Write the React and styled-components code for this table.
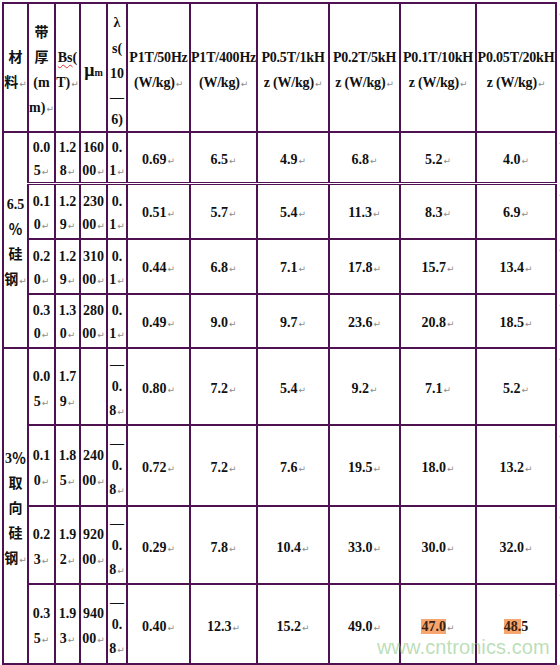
import React from "react";
import styled, { createGlobalStyle } from "styled-components";

const GlobalStyle = createGlobalStyle`
  html, body {
    margin: 0;
    padding: 0;
    background: #ffffff;
  }
  body {
    width: 560px;
    height: 665px;
    overflow: hidden;
  }
`;

const LINE = "#4e1152";

const widths = [25, 27, 25, 27, 20, 63, 67, 72, 71, 76, 80, 10];
const total = widths.reduce((a, b) => a + b, 0);

const Page = styled.div`
  position: relative;
  width: 560px;
  height: 665px;
  padding: 2px 0 0 2px;
  box-sizing: border-box;
  overflow: hidden;
`;

const Table = styled.table`
  width: ${total}px;
  border-collapse: collapse;
  table-layout: fixed;
  font-family: "Liberation Serif", "Noto Sans CJK SC", serif;
  font-weight: 700;
  font-size: 14px;
  color: #111111;
`;

const Col = styled.col`
  width: ${(p) => p.$w}px;
`;

const Row = styled.tr`
  height: ${(p) => p.$h}px;
`;

const Cell = styled.td`
  border: 2px solid ${LINE};
  border-top-style: ${(p) => (p.$double ? "double" : "solid")};
  border-top-width: ${(p) => (p.$double ? "3px" : "2px")};
  padding: ${(p) => (p.$compact ? "3px 0 0" : "5px 0 0")};
  text-align: center;
  vertical-align: middle;
  line-height: 25px;
  white-space: nowrap;
  overflow: hidden;
  letter-spacing: ${(p) => (p.$tight ? "-0.2px" : "0")};
`;

const EndCell = styled.td`
  border: none;
  padding: 4px 0 0 1px;
  vertical-align: top;
  text-align: left;
  line-height: 12px;
`;

const Line = styled.div`
  height: ${(p) => p.$lh}px;
  line-height: ${(p) => p.$lh}px;
`;

const Mark = styled.span`
  font-family: "DejaVu Sans", sans-serif;
  font-weight: 400;
  font-size: 9px;
  color: #8c8c8c;
  margin-left: 1px;
`;

const Spell = styled.span`
  text-decoration: underline wavy #e03030;
  text-decoration-thickness: 1px;
  text-underline-offset: 2px;
  text-decoration-skip-ink: none;
`;

const Mu = styled.span`
  font-size: 18px;
`;

const Small = styled.span`
  font-size: 10px;
`;

const Highlight = styled.span`
  background: #f6a66e;
  color: #3a2210;
`;

const Watermark = styled.div`
  position: absolute;
  left: 377px;
  top: 636px;
  font-family: "Liberation Sans", Arial, sans-serif;
  font-size: 20px;
  color: rgba(130, 195, 120, 0.55);
  letter-spacing: 0.1px;
  pointer-events: none;
`;

const Lines = ({ lines, mark = true, heights, lh = 25 }) => (
  <>
    {lines.map((l, i) => (
      <Line key={i} $lh={heights ? heights[i] : lh}>
        {l}
        {mark && i === lines.length - 1 && <Mark>↵</Mark>}
      </Line>
    ))}
  </>
);

const headers = [
  ["P1T/50Hz", "(W/kg)"],
  ["P1T/400Hz", "(W/kg)"],
  ["P0.5T/1kH", "z (W/kg)"],
  ["P0.2T/5kH", "z (W/kg)"],
  ["P0.1T/10kH", "z (W/kg)"],
  ["P0.05T/20kH", "z (W/kg)"],
];

const neg = { lines: ["—", "0.", "8"], heights: [21, 24, 24] };

const groups = [
  {
    label: ["6.5", "％", "硅", "钢"],
    compact: true,
    rows: [
      { h: 51, v: [["0.0", "5"], ["1.2", "8"], ["160", "00"], ["0.", "1"], "0.69", "6.5", "4.9", "6.8", "5.2", "4.0"] },
      { h: 55, double: true, v: [["0.1", "0"], ["1.2", "9"], ["230", "00"], ["0.", "1"], "0.51", "5.7", "5.4", "11.3", "8.3", "6.9"] },
      { h: 55, v: [["0.2", "0"], ["1.2", "9"], ["310", "00"], ["0.", "1"], "0.44", "6.8", "7.1", "17.8", "15.7", "13.4"] },
      { h: 54, v: [["0.3", "0"], ["1.3", "0"], ["280", "00"], ["0.", "1"], "0.49", "9.0", "9.7", "23.6", "20.8", "18.5"] },
    ],
  },
  {
    label: ["3％", "取", "向", "硅", "钢"],
    compact: false,
    rows: [
      { h: 77, v: [["0.0", "5"], ["1.7", "9"], null, neg, "0.80", "7.2", "5.4", "9.2", "7.1", "5.2"] },
      { h: 81, v: [["0.1", "0"], ["1.8", "5"], ["240", "00"], neg, "0.72", "7.2", "7.6", "19.5", "18.0", "13.2"] },
      { h: 78, v: [["0.2", "3"], ["1.9", "2"], ["920", "00"], neg, "0.29", "7.8", "10.4", "33.0", "30.0", "32.0"] },
      {
        h: 80,
        v: [
          ["0.3", "5"],
          ["1.9", "3"],
          ["940", "00"],
          neg,
          "0.40",
          "12.3",
          "15.2",
          "49.0",
          { node: <Highlight>47.0</Highlight>, mark: true },
          { node: <><Highlight>48.</Highlight>5</>, mark: false },
        ],
      },
    ],
  },
];

const renderValue = (v, lh) => {
  if (v === null) return null;
  if (typeof v === "string") return <Lines lines={[v]} lh={lh} />;
  if (Array.isArray(v)) return <Lines lines={v} lh={lh} />;
  if (v.lines) return <Lines lines={v.lines} heights={v.heights} />;
  return <Lines lines={[v.node]} mark={v.mark} lh={lh} />;
};

const App = () => {
  return (
    <Page>
      <GlobalStyle />
      <Table>
        <colgroup>
          {widths.map((w, i) => (
            <Col key={i} $w={w} />
          ))}
        </colgroup>
        <tbody>
          <Row $h={129}>
            <Cell>
              <Lines lines={["材", "料"]} />
            </Cell>
            <Cell>
              <Lines lines={["带", "厚", "(m", "m)"]} />
            </Cell>
            <Cell>
              <Lines lines={[<><Spell>Bs</Spell>(</>, "T)"]} />
            </Cell>
            <Cell>
              <Lines lines={[<><Mu>μ</Mu><Small>m</Small></>]} mark={false} />
            </Cell>
            <Cell>
              <Lines
                lines={["λ", "s(", "10", "—", "6)"]}
                heights={[27, 25, 25, 23, 22]}
                mark={false}
              />
            </Cell>
            {headers.map((h, i) => (
              <Cell key={i} $tight>
                <Lines lines={h} />
              </Cell>
            ))}
            <EndCell>
              <Mark>↵</Mark>
            </EndCell>
          </Row>
          {groups.map((g) =>
            g.rows.map((r, ri) => (
              <Row key={g.label[0] + ri} $h={r.h}>
                {ri === 0 && (
                  <Cell rowSpan={g.rows.length}>
                    <Lines lines={g.label} />
                  </Cell>
                )}
                {r.v.map((v, ci) => (
                  <Cell key={ci} $double={r.double} $compact={g.compact}>
                    {renderValue(v, g.compact ? 23 : 25)}
                  </Cell>
                ))}
                <EndCell>
                  <Mark>↵</Mark>
                </EndCell>
              </Row>
            ))
          )}
        </tbody>
      </Table>
      <Watermark>www.cntronics.com</Watermark>
    </Page>
  );
};

export default App;
